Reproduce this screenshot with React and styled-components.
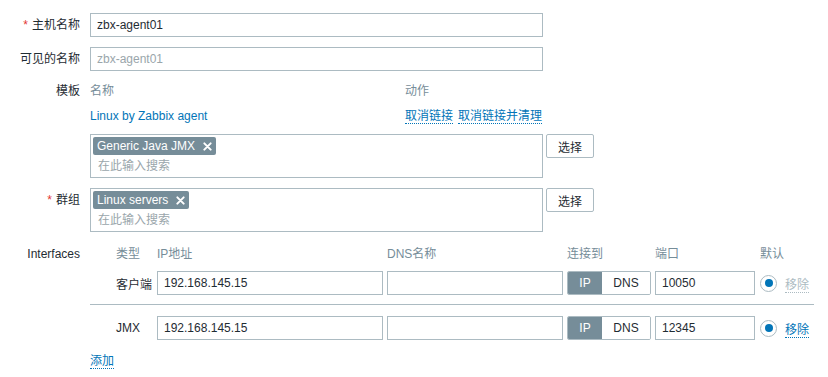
import React from "react";
import styled, { createGlobalStyle } from "styled-components";

const GlobalStyle = createGlobalStyle`
  body {
    margin: 0;
    background: #ffffff;
    font-family: "Liberation Sans", Arial, "Noto Sans CJK SC", sans-serif;
    font-size: 12px;
    color: #1f2c33;
  }
`;

const Page = styled.div`
  width: 828px;
  height: 377px;
  padding-top: 13px;
  box-sizing: border-box;
  overflow: hidden;
`;

const FormRow = styled.div`
  display: grid;
  grid-template-columns: 80px 1fr;
  column-gap: 10px;
  margin-bottom: 10px;
`;

const Label = styled.div`
  text-align: right;
  line-height: ${(p) => p.$lh || 24}px;
  white-space: nowrap;
`;

const Required = styled.span`
  color: #e33734;
  margin-right: 4px;
`;

const TextInput = styled.input`
  box-sizing: border-box;
  width: ${(p) => p.$w || 453}px;
  height: 24px;
  border: 1px solid #acbbc2;
  border-radius: 0;
  padding: 0 6px;
  margin: 0;
  font-family: inherit;
  font-size: 12px;
  color: #1f2c33;
  background: #fff;
  outline: none;

  &::placeholder {
    color: #9aa6ab;
  }
`;

const TplTable = styled.div`
  width: 453px;
`;

const TplHead = styled.div`
  display: grid;
  grid-template-columns: 315px 1fr;
  line-height: 20px;
  color: #768d99;
`;

const TplLine = styled.div`
  display: grid;
  grid-template-columns: 315px 1fr;
  margin-top: 5px;
  line-height: 21px;
  margin-bottom: 7px;
`;

const Link = styled.a`
  color: #0275b8;
  text-decoration: none;
  cursor: pointer;
  border-bottom: ${(p) => (p.$plain ? "none" : "1px dotted #0275b8")};
  margin-right: ${(p) => p.$mr || 0}px;
`;

const Disabled = styled.span`
  color: #acbbc2;
  border-bottom: 1px dotted #acbbc2;
`;

const PickerLine = styled.div`
  display: flex;
  align-items: flex-start;
  gap: 3px;
`;

const MultiSelect = styled.div`
  box-sizing: border-box;
  width: 453px;
  height: 44px;
  border: 1px solid #acbbc2;
  padding: 2px 2px 0;
`;

const Tag = styled.span`
  display: inline-flex;
  align-items: center;
  height: 18px;
  padding: 0 4px;
  background: #768d99;
  color: #fff;
  border-radius: 2px;
  font-size: 12px;
`;

const TagClose = styled.svg`
  margin-left: 8px;
  width: 9px;
  height: 9px;
`;

const Placeholder = styled.div`
  color: #9aa6ab;
  padding-left: 5px;
  line-height: 22px;
`;

const Button = styled.button`
  box-sizing: border-box;
  width: 48px;
  height: 24px;
  border: 1px solid #acbbc2;
  border-radius: 2px;
  background: #fff;
  color: #1f2c33;
  font-family: inherit;
  font-size: 12px;
  padding: 0;
`;

const IfTable = styled.div`
  width: 724px;
`;

const IfGrid = styled.div`
  display: grid;
  grid-template-columns: 26px 41px 230px 180px 88px 105px 25px 1fr;
  align-items: center;
  white-space: nowrap;
  padding-top: ${(p) => p.$pt || 0}px;
  padding-bottom: ${(p) => p.$pb || 0}px;
  border-bottom: ${(p) => (p.$sep ? "1px solid #acbbc2" : "none")};
`;

const HeadCell = styled.div`
  color: #768d99;
  line-height: 24px;
`;

const Toggle = styled.div`
  display: flex;
  box-sizing: border-box;
  width: 84px;
  height: 24px;
  border: 1px solid #acbbc2;
  border-radius: 2px;
  overflow: hidden;
`;

const ToggleItem = styled.div`
  flex: ${(p) => (p.$active ? "0 0 34px" : "1")};
  display: flex;
  align-items: center;
  justify-content: center;
  background: ${(p) => (p.$active ? "#768d99" : "#fff")};
  color: ${(p) => (p.$active ? "#fff" : "#1f2c33")};
`;

const Radio = styled.span`
  box-sizing: border-box;
  display: inline-flex;
  align-items: center;
  justify-content: center;
  width: 17px;
  height: 17px;
  border: 1px solid #acbbc2;
  border-radius: 50%;

  &::after {
    content: "";
    width: 8px;
    height: 8px;
    border-radius: 50%;
    background: #0275b8;
  }
`;

const AddLine = styled.div`
  margin-top: 11px;
  line-height: 20px;
`;

const CloseIcon = () => (
  <TagClose viewBox="0 0 10 10">
    <path d="M1.5 1.5 L8.5 8.5 M8.5 1.5 L1.5 8.5" stroke="#fff" strokeWidth="2.2" strokeLinecap="round" />
  </TagClose>
);

const Picker = ({ tag }) => (
  <PickerLine>
    <MultiSelect>
      <Tag>
        {tag}
        <CloseIcon />
      </Tag>
      <Placeholder>在此输入搜索</Placeholder>
    </MultiSelect>
    <Button>选择</Button>
  </PickerLine>
);

const InterfaceRow = ({ type, ip, port, canRemove, ...rest }) => (
  <IfGrid {...rest}>
    <div />
    <div>{type}</div>
    <TextInput $w={226} defaultValue={ip} />
    <TextInput $w={176} defaultValue="" />
    <Toggle>
      <ToggleItem $active>IP</ToggleItem>
      <ToggleItem>DNS</ToggleItem>
    </Toggle>
    <TextInput $w={100} defaultValue={port} />
    <Radio />
    <div>{canRemove ? <Link>移除</Link> : <Disabled>移除</Disabled>}</div>
  </IfGrid>
);

export default function App() {
  return (
    <Page>
      <GlobalStyle />
      <FormRow>
        <Label>
          <Required>*</Required>主机名称
        </Label>
        <TextInput defaultValue="zbx-agent01" />
      </FormRow>
      <FormRow>
        <Label>可见的名称</Label>
        <TextInput placeholder="zbx-agent01" />
      </FormRow>
      <FormRow>
        <Label $lh={21}>模板</Label>
        <div>
          <TplTable>
            <TplHead>
              <div>名称</div>
              <div>动作</div>
            </TplHead>
            <TplLine>
              <div>
                <Link $plain>Linux by Zabbix agent</Link>
              </div>
              <div>
                <Link $mr={5}>取消链接</Link>
                <Link>取消链接并清理</Link>
              </div>
            </TplLine>
          </TplTable>
          <Picker tag="Generic Java JMX" />
        </div>
      </FormRow>
      <FormRow>
        <Label>
          <Required>*</Required>群组
        </Label>
        <Picker tag="Linux servers" />
      </FormRow>
      <FormRow>
        <Label>Interfaces</Label>
        <IfTable>
          <IfGrid>
            <div />
            <HeadCell>类型</HeadCell>
            <HeadCell>IP地址</HeadCell>
            <HeadCell>DNS名称</HeadCell>
            <HeadCell>连接到</HeadCell>
            <HeadCell>端口</HeadCell>
            <HeadCell>默认</HeadCell>
            <div />
          </IfGrid>
          <InterfaceRow type="客户端" ip="192.168.145.15" port="10050" $pt={5} $pb={9} $sep />
          <InterfaceRow type="JMX" ip="192.168.145.15" port="12345" canRemove $pt={11} />
          <AddLine>
            <Link>添加</Link>
          </AddLine>
        </IfTable>
      </FormRow>
    </Page>
  );
}
